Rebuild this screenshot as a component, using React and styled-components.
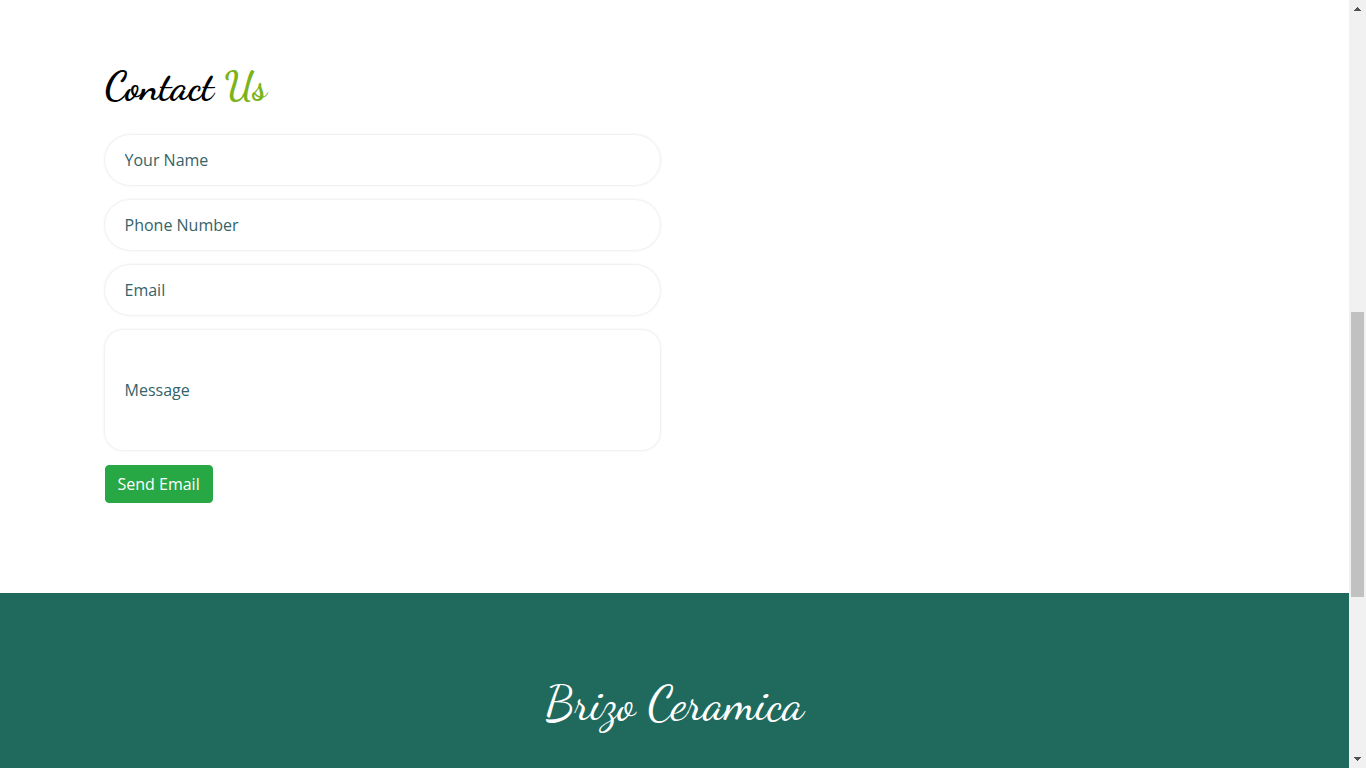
import React from "react";
import styled, { createGlobalStyle } from "styled-components";

const script = `"Dancing Script", cursive`;

const GlobalStyle = createGlobalStyle`
  *, *::before, *::after { box-sizing: border-box; }
  body {
    margin: 0;
    background: #fff;
    color: #000;
    font-family: "Open Sans", sans-serif;
    font-size: 16px;
    line-height: 24px;
  }
`;

const Shell = styled.div`
  display: flex;
  align-items: flex-start;
`;

const Page = styled.div`
  flex: 1;
  min-width: 0;
  min-height: 100vh;
  display: flex;
  flex-direction: column;
`;

const Section = styled.section`
  padding: 60px 15px 90px;
`;

const Container = styled.div`
  max-width: 1140px;
  margin: 0 auto;
`;

const Title = styled.h2`
  margin: 0 0 23px;
  font: 700 40px/52px ${script};
`;

const Accent = styled.span`
  color: #7bb31a;
`;

const Form = styled.form`
  display: flex;
  flex-direction: column;
  align-items: flex-start;
  gap: 15px;
  width: calc(50% - 15px);

  @media (max-width: 767px) {
    width: 100%;
  }
`;

const Field = styled.input`
  width: 100%;
  height: ${(p) => (p.$tall ? 120 : 50)}px;
  padding: 0 20px;
  border: 0;
  border-radius: ${(p) => (p.$tall ? 18 : 25)}px;
  background: #fff;
  box-shadow: 0 0 3px rgba(0, 0, 0, 0.15);
  color: #206a5d;
  font: inherit;

  &::placeholder {
    color: #356369;
    opacity: 1;
  }
`;

const Button = styled.button`
  height: 38px;
  padding: 0 12px;
  border: 1px solid #28a745;
  border-radius: 4px;
  background: #28a745;
  color: #fff;
  font: inherit;
  cursor: pointer;
`;

const Footer = styled.footer`
  flex: 1;
  padding: 75px 15px 0;
  background: #206a5d;
  color: #fff;
  text-align: center;
`;

const Brand = styled.h2`
  margin: 0;
  font: 400 48px/72px ${script};
`;

const ScrollBar = styled.div`
  position: sticky;
  top: 0;
  display: flex;
  flex-direction: column;
  width: 17px;
  height: 100vh;
  background: #f1f1f1;
`;

const Arrow = styled.svg`
  display: block;
  flex: none;
  width: 17px;
  height: 17px;
  fill: #505050;
`;

const Track = styled.div`
  flex: ${(p) => p.$size} 0 0;
`;

const Thumb = styled(Track)`
  margin: 0 2px;
  background: #c1c1c1;
`;

const fields = [
  { name: "name", type: "text", label: "Your Name" },
  { name: "phone", type: "tel", label: "Phone Number" },
  { name: "email", type: "email", label: "Email" },
  { name: "message", type: "text", label: "Message", tall: true },
];

export default function App() {
  return (
    <>
      <GlobalStyle />
      <Shell>
        <Page>
          <Section>
            <Container>
              <Title>
                Contact <Accent>Us</Accent>
              </Title>
              <Form onSubmit={(e) => e.preventDefault()}>
                {fields.map((f) => (
                  <Field
                    key={f.name}
                    name={f.name}
                    type={f.type}
                    placeholder={f.label}
                    aria-label={f.label}
                    $tall={f.tall}
                  />
                ))}
                <Button type="submit">Send Email</Button>
              </Form>
            </Container>
          </Section>
          <Footer>
            <Brand>Brizo Ceramica</Brand>
          </Footer>
        </Page>
        <ScrollBar aria-hidden="true">
          <Arrow viewBox="0 0 17 17" shapeRendering="crispEdges">
            <path d="M8 7h1v1h1v1h1v1h1v1H5v-1h1V9h1V8h1z" />
          </Arrow>
          <Track $size={295} />
          <Thumb $size={285} />
          <Track $size={154} />
          <Arrow viewBox="0 0 17 17" shapeRendering="crispEdges">
            <path d="M5 6h7v1h-1v1h-1v1H9v1H8V9H7V8H6V7H5z" />
          </Arrow>
        </ScrollBar>
      </Shell>
    </>
  );
}
